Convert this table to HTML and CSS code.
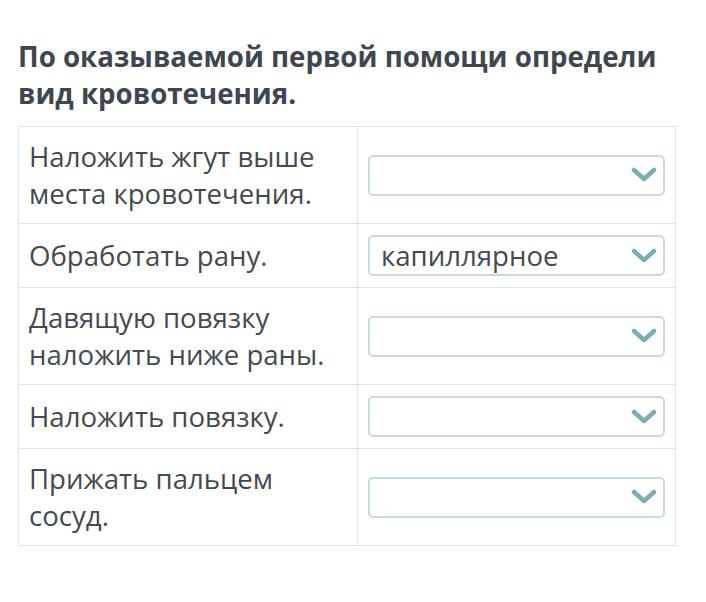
FILE: index.html
```html
<!DOCTYPE html>
<html lang="ru">
<head>
<meta charset="utf-8">
<link rel="stylesheet" href="styles.css">
</head>
<body>
<div class="page">
  <h1 class="title">По оказываемой первой помощи определи вид кровотечения.</h1>
  <table class="match">
    <tr>
      <td class="label">Наложить жгут выше места кровотечения.</td>
      <td class="answer"><div class="select"><span class="value"></span><svg class="chev" viewBox="0 0 26 16"><path d="M3 3 L13 12 L23 3" /></svg></div></td>
    </tr>
    <tr>
      <td class="label">Обработать рану.</td>
      <td class="answer"><div class="select"><span class="value">капиллярное</span><svg class="chev" viewBox="0 0 26 16"><path d="M3 3 L13 12 L23 3" /></svg></div></td>
    </tr>
    <tr>
      <td class="label">Давящую повязку наложить ниже раны.</td>
      <td class="answer"><div class="select"><span class="value"></span><svg class="chev" viewBox="0 0 26 16"><path d="M3 3 L13 12 L23 3" /></svg></div></td>
    </tr>
    <tr>
      <td class="label">Наложить повязку.</td>
      <td class="answer"><div class="select"><span class="value"></span><svg class="chev" viewBox="0 0 26 16"><path d="M3 3 L13 12 L23 3" /></svg></div></td>
    </tr>
    <tr>
      <td class="label">Прижать пальцем сосуд.</td>
      <td class="answer"><div class="select"><span class="value"></span><svg class="chev" viewBox="0 0 26 16"><path d="M3 3 L13 12 L23 3" /></svg></div></td>
    </tr>
  </table>
</div>
</body>
</html>
```
FILE: styles.css
```css
html, body {
  margin: 0;
  padding: 0;
  background: #ffffff;
}
.page {
  padding: 38px 30px 0 18px;
  font-family: "Open Sans", "Liberation Sans", sans-serif;
}
.title {
  margin: 0 0 14px 0;
  font-size: 27.7px;
  font-weight: 700;
  line-height: 37px;
  color: #3e4750;
}
.match {
  border-collapse: collapse;
  width: 658px;
}
.match td {
  border: 1px solid #dde5e5;
  padding: 11px 10px;
  vertical-align: middle;
}
.label {
  width: 318px;
  font-size: 27.6px;
  line-height: 37px;
  color: #444a4f;
  padding-right: 10px;
}
.answer {
  padding-right: 12px;
}
.select {
  height: 37px;
  border: 2px solid #c6dcdc;
  border-radius: 5px;
  display: flex;
  align-items: center;
  justify-content: space-between;
  padding: 0 6px 0 11px;
}
.value {
  font-size: 27.6px;
  color: #444a4f;
  line-height: 37px;
}
.chev {
  width: 26px;
  height: 16px;
}
.chev path {
  fill: none;
  stroke: #7aaeb3;
  stroke-width: 4.5;
  stroke-linecap: round;
  stroke-linejoin: round;
}
```
